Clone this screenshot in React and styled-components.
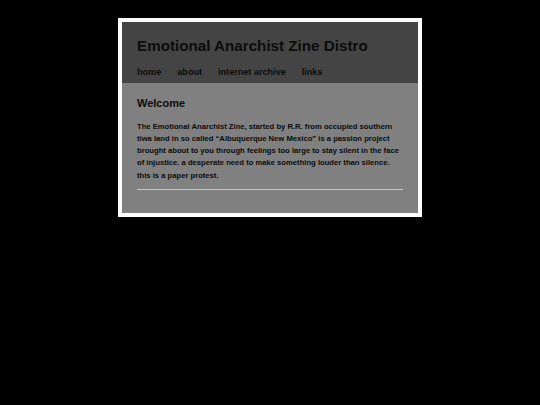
import React from 'react'
import styled, { createGlobalStyle } from 'styled-components'

const GlobalStyle = createGlobalStyle`
    html, body {
        margin: 0;
        padding: 0;
        background-color: #000;
    }
    body {
        font-family: "Liberation Sans", Arial, sans-serif;
    }
`

function App() {
    return (
        <>
            <GlobalStyle />
            <Page>
                <Frame>
                    <Header>
                        <SiteTitle>Emotional Anarchist Zine Distro</SiteTitle>
                        <Nav>
                            <NavLink>home</NavLink>
                            <NavLink>about</NavLink>
                            <NavLink>internet archive</NavLink>
                            <NavLink>links</NavLink>
                        </Nav>
                    </Header>
                    <Main>
                        <Heading>Welcome</Heading>
                        <Intro>
                            The Emotional Anarchist Zine, started by R.R. from occupied southern
                            tiwa land in so called “Albuquerque New Mexico” is a passion project
                            brought about to you through feelings too large to stay silent in the face
                            of injustice. a desperate need to make something louder than silence.
                            this is a paper protest.
                        </Intro>
                        <Rule />
                    </Main>
                </Frame>
            </Page>
        </>
    )
}

const Page = styled.div`
    display: flex;
    justify-content: center;
    align-items: flex-start;
    padding-top: 18px;
    min-height: 405px;
    box-sizing: border-box;
`
const Frame = styled.div`
    width: 296px;
    border: 4px solid #fff;
    background-color: #808080;
`
const Header = styled.header`
    background-color: #444;
    height: 61px;
    box-sizing: border-box;
    padding: 15px 15px 0;
`
const SiteTitle = styled.h1`
    margin: 0;
    font-size: 15.2px;
    line-height: 18px;
    font-weight: bold;
    color: #0c0c0c;
`
const Nav = styled.nav`
    display: flex;
    gap: 16px;
    margin-top: 11px;
`
const NavLink = styled.span`
    font-size: 9.1px;
    line-height: 12px;
    font-weight: bold;
    color: #0c0c0c;
`
const Main = styled.main`
    padding: 13px 15px 23px;
`
const Heading = styled.h2`
    margin: 0;
    font-size: 11px;
    line-height: 14px;
    font-weight: bold;
    color: #0c0c0c;
`
const Intro = styled.p`
    margin: 10.5px 0 0;
    font-size: 7.65px;
    line-height: 12.25px;
    font-weight: bold;
    color: #0c0c0c;
`
const Rule = styled.hr`
    margin: 7px 0 0;
    border: none;
    height: 1px;
    background-color: #c8c8c8;
`

export default App
